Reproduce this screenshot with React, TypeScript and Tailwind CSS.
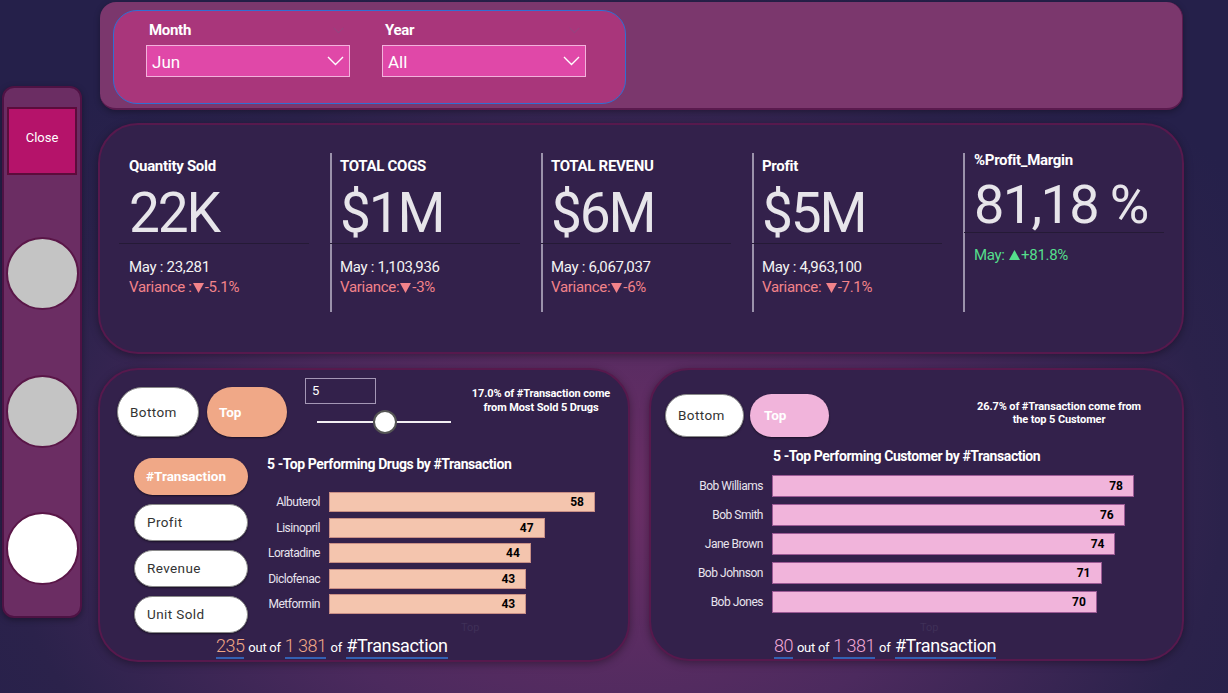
import React from 'react';

const kpis = [
  { label: 'Quantity Sold', value: '22K', prev: 'May : 23,281', variance: 'Variance :', delta: '-5.1%' },
  { label: 'TOTAL COGS', value: '$1M', prev: 'May : 1,103,936', variance: 'Variance:', delta: '-3%' },
  { label: 'TOTAL REVENU', value: '$6M', prev: 'May : 6,067,037', variance: 'Variance:', delta: '-6%' },
  { label: 'Profit', value: '$5M', prev: 'May : 4,963,100', variance: 'Variance: ', delta: '-7.1%' },
];

const drugs = [
  { name: 'Albuterol', value: 58 },
  { name: 'Lisinopril', value: 47 },
  { name: 'Loratadine', value: 44 },
  { name: 'Diclofenac', value: 43 },
  { name: 'Metformin', value: 43 },
];

const customers = [
  { name: 'Bob Williams', value: 78 },
  { name: 'Bob Smith', value: 76 },
  { name: 'Jane Brown', value: 74 },
  { name: 'Bob Johnson', value: 71 },
  { name: 'Bob Jones', value: 70 },
];

function Chevron({ className = '' }: { className?: string }) {
  return (
    <svg width="17" height="10" viewBox="0 0 17 10" className={className} fill="none">
      <polyline points="1,1 8.5,8.5 16,1" stroke="currentColor" strokeWidth="1.4" />
    </svg>
  );
}

function Tri({ up }: { up?: boolean }) {
  return (
    <svg width="11" height="10" viewBox="0 0 11 10" className="mx-[1px]">
      <polygon points={up ? '0,10 11,10 5.5,0' : '0,0 11,0 5.5,10'} fill="currentColor" />
    </svg>
  );
}

function Slicer({ label, value }: { label: string; value: string }) {
  return (
    <div className="w-[204px] flex flex-col">
      <div className="h-[24px] flex items-start justify-between pl-[3px] pr-[6px]">
        <span className="text-[15px] font-bold text-white leading-[18px] tracking-[-0.02em]">{label}</span>
        <Chevron className="text-[#8d4a83] w-[11px] h-[7px] mt-[6px]" />
      </div>
      <div className="h-[32px] bg-[#e048a8] border border-[#f3b2dc] flex items-center justify-between pl-[5px] pr-[5px]">
        <span className="text-[17px] text-white leading-none mt-[3px]">{value}</span>
        <Chevron className="text-white" />
      </div>
    </div>
  );
}

function Pill({ label, active, color, w, h, pl }: { label: string; active?: boolean; color: string; w: string; h: string; pl: string }) {
  return (
    <div
      className={`${w} ${h} ${pl} rounded-full flex items-center text-[13.5px] shadow-[0_1px_2px_rgba(0,0,0,0.5)] ${
        active ? `${color} text-white font-bold` : 'bg-white text-[#333] border border-[#8a8a8a] tracking-[0.03em]'
      }`}
    >
      {label}
    </div>
  );
}

function Bars({
  rows,
  scale,
  labelW,
  barH,
  gap,
  fill,
}: {
  rows: { name: string; value: number }[];
  scale: number;
  labelW: string;
  barH: string;
  gap: string;
  fill: string;
}) {
  return (
    <div className={`flex flex-col ${gap}`}>
      {rows.map((r) => (
        <div key={r.name} className={`flex items-center ${barH}`}>
          <div className={`${labelW} shrink-0 text-right pr-[9px] text-[12px] tracking-[-0.04em] text-[#e8e4ee]`}>{r.name}</div>
          <div
            className={`${barH} ${fill} flex items-center justify-end pr-[10px] text-[12px] font-bold text-black`}
            style={{ width: r.value * scale }}
          >
            {r.value}
          </div>
        </div>
      ))}
    </div>
  );
}

function Footer({ count, accent }: { count: string; accent: string }) {
  return (
    <div className="flex items-end gap-[4px] leading-[22px]">
      <span className={`text-[18px] font-light ${accent} border-b-2 border-[#3461b3] tracking-[-0.03em]`}>{count}</span>
      <span className="text-[13px] text-white tracking-[-0.02em]">out of</span>
      <span className={`text-[18px] font-light ${accent} border-b-2 border-[#3461b3] tracking-[-0.03em]`}>1 381</span>
      <span className="text-[13px] text-white">of</span>
      <span className="text-[18px] text-white border-b-2 border-[#3461b3] tracking-[-0.02em]">#Transaction</span>
    </div>
  );
}

export default function App() {
  return (
    <div className="relative w-[1228px] h-[693px] overflow-hidden flex font-['Roboto',sans-serif] bg-[#27214a] bg-[radial-gradient(ellipse_62%_80%_at_50%_72%,#6c2f67_0%,#4c2a5e_45%,#2b224b_80%,#25204a_100%)]">
      {/* sidebar */}
      <div className="w-[98px] shrink-0 pt-[86px] pl-[2px]">
        <div className="w-[80px] h-[532px] rounded-[12px] bg-[#6b2d63] border-2 border-[#4e1244] flex flex-col items-center shadow-[0_2px_6px_rgba(0,0,0,0.35)]">
          <div className="mt-[19px] w-[70px] h-[68px] bg-[#b5136a] border-2 border-[#5c0c3c] flex items-center justify-center pb-[6px] text-[13px] text-white">
            Close
          </div>
          <div className="mt-[62px] w-[73px] h-[73px] rounded-full bg-[#c4c4c4] border-2 border-[#5a1648]" />
          <div className="mt-[65px] w-[73px] h-[73px] rounded-full bg-[#c4c4c4] border-2 border-[#5a1648]" />
          <div className="mt-[64px] w-[73px] h-[73px] rounded-full bg-white border-2 border-[#5a1648]" />
        </div>
      </div>

      {/* main */}
      <div className="w-[1086px] flex flex-col">
        {/* header */}
        <div className="mt-[2px] ml-[2px] w-[1083px] h-[108px] rounded-[16px] bg-[#7b376d] border-b-2 border-r border-[#5a1a4e] shadow-[0_2px_6px_rgba(0,0,0,0.3)] pt-[8px] pl-[13px]">
          <div className="w-[513px] h-[94px] rounded-[24px] border border-[#2f6fd3] bg-[#a9367b] flex gap-[32px] pl-[32px] pt-[10px]">
            <Slicer label="Month" value="Jun" />
            <Slicer label="Year" value="All" />
          </div>
        </div>

        {/* KPI panel */}
        <div className="mt-[13px] w-[1086px] h-[231px] rounded-[40px] bg-[#33214b] border-2 border-[#57194d] shadow-[0_2px_8px_rgba(0,0,0,0.35)] flex pl-[19px] pt-[28px]">
          {kpis.map((k, i) => (
            <div
              key={k.label}
              className={`w-[211px] h-[159px] flex flex-col ${i === 0 ? 'pl-[10px]' : 'pl-[8px] border-l-2 border-[#9b92ab]'}`}
            >
              <div className="mt-[4px] h-[18px] text-[15px] font-bold text-white leading-[18px] tracking-[-0.02em]">{k.label}</div>
              <div className="mt-[11px] h-[54px] text-[55px] leading-[54px] text-[#e7e5ea] tracking-[-0.04em]">{k.value}</div>
              <div className="mt-[3px] -ml-[10px] w-[190px] h-px bg-[#251a36]" />
              <div className="mt-[13px] h-[20px] text-[15px] leading-[20px] text-[#f3f3f3] tracking-[-0.02em]">{k.prev}</div>
              <div className="h-[21px] text-[15px] leading-[21px] text-[#f2838a] tracking-[-0.02em] whitespace-pre flex items-center">
                {k.variance}
                <Tri />
                {k.delta}
              </div>
            </div>
          ))}
          <div className="w-[211px] h-[159px] flex flex-col pl-[9px] border-l-2 border-[#9b92ab]">
            <div className="-mt-[2px] h-[18px] text-[15px] font-bold text-white leading-[18px] tracking-[-0.02em]">%Profit_Margin</div>
            <div className="mt-[9px] h-[54px] text-[54px] leading-[54px] text-[#e7e5ea] tracking-[-0.03em] whitespace-nowrap">81,18 %</div>
            <div className="mt-[0px] -ml-[10px] w-[200px] h-px bg-[#251a36]" />
            <div className="mt-[12px] h-[20px] text-[15px] leading-[20px] text-[#55df8c] tracking-[-0.02em] flex items-center whitespace-pre">
              {'May: '}
              <Tri up />
              +81.8%
            </div>
          </div>
        </div>

        {/* bottom panels */}
        <div className="mt-[14px] flex gap-[19px]">
          {/* drugs */}
          <div className="w-[532px] h-[294px] rounded-[40px] bg-[#33214b] border-2 border-[#57194d] shadow-[0_2px_8px_rgba(0,0,0,0.35)] flex flex-col">
            <div className="flex items-start pl-[17px] pt-[8px]">
              <div className="mt-[9px] flex gap-[8px]">
                <Pill label="Bottom" color="" w="w-[82px]" h="h-[50px]" pl="pl-[12px]" />
                <Pill label="Top" active color="bg-[#f0a887]" w="w-[80px]" h="h-[50px]" pl="pl-[12px]" />
              </div>
              <div className="ml-[18px] w-[146px] flex flex-col">
                <div className="w-[71px] h-[26px] border border-[#a497b5] text-[13px] text-white pl-[6px] leading-[24px]">5</div>
                <div className="relative mt-[6px] h-[24px] ml-[12px] w-[134px]">
                  <div className="absolute left-0 right-0 top-[11px] h-[2px] bg-[#f2eef2]" />
                  <div className="absolute left-[56px] top-0 w-[24px] h-[24px] rounded-full bg-white border-2 border-[#555]" />
                </div>
              </div>
              <div className="ml-[10px] mt-[9px] w-[160px] text-center text-[11px] font-bold text-white leading-[14px] tracking-[-0.01em]">
                17.0% of #Transaction come
                <br />
                from Most Sold 5 Drugs
              </div>
            </div>

            <div className="mt-[19px] flex pl-[34px]">
              <div className="pt-[2px] flex flex-col gap-[9px]">
                <Pill label="#Transaction" active color="bg-[#f0a887]" w="w-[114px]" h="h-[37px]" pl="pl-[12px]" />
                <Pill label="Profit" color="" w="w-[114px]" h="h-[37px]" pl="pl-[12px]" />
                <Pill label="Revenue" color="" w="w-[114px]" h="h-[37px]" pl="pl-[12px]" />
                <Pill label="Unit Sold" color="" w="w-[114px]" h="h-[37px]" pl="pl-[12px]" />
              </div>
              <div className="ml-[19px] flex flex-col">
                <div className="-mt-[1px] h-[18px] text-[14px] font-bold text-white leading-[18px] tracking-[-0.03em] whitespace-nowrap">
                  5 -Top Performing Drugs by #Transaction
                </div>
                <div className="mt-[19px] -ml-[5px]">
                  <Bars rows={drugs} scale={266 / 58} labelW="w-[67px]" barH="h-[20px]" gap="gap-[5.6px]" fill="bg-[#f4c5ae] border border-[#c98f86]" />
                </div>
                <div className="mt-[8px] h-[12px] pl-[194px] text-[11px] leading-[12px] text-[#3f3058]">Top</div>
              </div>
            </div>

            <div className="pl-[116px] mt-[1px]">
              <Footer count="235" accent="text-[#f0a887]" />
            </div>
          </div>

          {/* customers */}
          <div className="w-[535px] h-[293px] rounded-[40px] bg-[#33214b] border-2 border-[#57194d] shadow-[0_2px_8px_rgba(0,0,0,0.35)] flex flex-col">
            <div className="flex items-start pl-[14px] pt-[24px]">
              <div className="flex gap-[6px]">
                <Pill label="Bottom" color="" w="w-[79px]" h="h-[43px]" pl="pl-[12px]" />
                <Pill label="Top" active color="bg-[#f1b4db]" w="w-[79px]" h="h-[43px]" pl="pl-[14px]" />
              </div>
              <div className="ml-[138px] mt-[6px] w-[184px] text-center text-[11px] font-bold text-white leading-[13px] tracking-[-0.01em]">
                26.7% of #Transaction come from
                <br />
                the top 5 Customer
              </div>
            </div>
            <div className="mt-[10px] pl-[122px] h-[18px] text-[14px] font-bold text-white leading-[18px] tracking-[-0.03em] whitespace-nowrap">
              5 -Top Performing Customer by #Transaction
            </div>
            <div className="mt-[10px] pl-[13px]">
              <Bars rows={customers} scale={362 / 78} labelW="w-[108px]" barH="h-[22px]" gap="gap-[7px]" fill="bg-[#f1b4db] border border-[#9c5a95]" />
            </div>
            <div className="mt-[9px] h-[12px] pl-[269px] text-[11px] leading-[12px] text-[#3f3058]">Top</div>
            <div className="pl-[123px] mt-[1px]">
              <Footer count="80" accent="text-[#f0a8d6]" />
            </div>
          </div>
        </div>
      </div>
    </div>
  );
}
